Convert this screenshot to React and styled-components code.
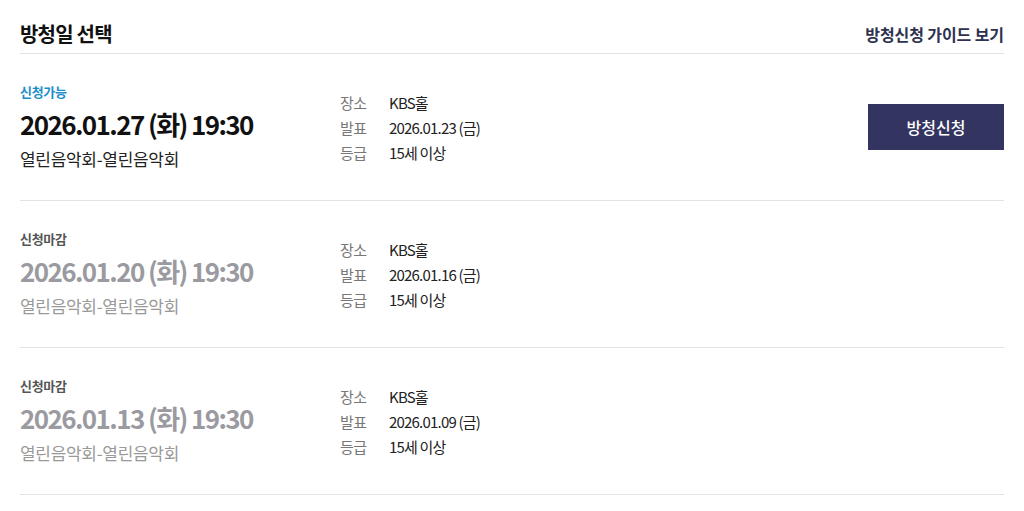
import React from "react";
import styled, { createGlobalStyle } from "styled-components";

const GlobalStyle = createGlobalStyle`
  body {
    margin: 0;
    background: #fff;
    font-family: "Noto Sans CJK KR", "Noto Sans", sans-serif;
  }
`

const Wrap = styled.div`
  padding: 0 20px;
`

const Header = styled.div`
  display: flex;
  justify-content: space-between;
  align-items: center;
  height: 54px;
  border-bottom: 1px solid #e3e3e3;
  box-sizing: border-box;
  padding-top: 14px;
`

const Title = styled.h2`
  margin: 0;
  font-size: 20px;
  font-weight: 700;
  color: #111;
  letter-spacing: -0.8px;
`

const GuideLink = styled.a`
  font-size: 16px;
  font-weight: 700;
  color: #2e3150;
  letter-spacing: -0.1px;
  text-decoration: none;
`

const Row = styled.div`
  display: flex;
  align-items: center;
  height: 147px;
  border-bottom: 1px solid #e3e3e3;
  box-sizing: border-box;
`

const Left = styled.div`
  width: 320px;
  display: flex;
  flex-direction: column;
`

const Status = styled.span`
  font-size: 13px;
  font-weight: 700;
  line-height: 20px;
  color: ${p => (p.open ? "#1b8ec9" : "#555")};
  letter-spacing: -0.3px;
`

const DateText = styled.div`
  font-size: 26px;
  font-weight: 700;
  line-height: 36px;
  margin-top: 4px;
  color: ${p => (p.open ? "#111" : "#9a9aa0")};
  letter-spacing: -1.6px;
`

const Program = styled.div`
  font-size: 17px;
  line-height: 26px;
  margin-top: 4px;
  color: ${p => (p.open ? "#222" : "#999")};
  letter-spacing: -0.3px;
`

const Info = styled.dl`
  flex: 1;
  margin: 0;
  display: grid;
  grid-template-columns: 50px 1fr;
  grid-auto-rows: 25px;
  align-items: center;
`

const Label = styled.dt`
  font-size: 15px;
  color: #777;
  letter-spacing: -0.5px;
`

const Value = styled.dd`
  margin: 0;
  margin-left: -1px;
  font-size: 15px;
  color: #222;
  letter-spacing: -0.8px;
`

const ApplyButton = styled.button`
  width: 136px;
  height: 46px;
  border: 0;
  background: #33345f;
  color: #fff;
  font-family: inherit;
  font-size: 16px;
  font-weight: 500;
  letter-spacing: 0;
  cursor: pointer;
`

const schedules = [
  { open: true, date: "2026.01.27 (화) 19:30", notice: "2026.01.23 (금)" },
  { open: false, date: "2026.01.20 (화) 19:30", notice: "2026.01.16 (금)" },
  { open: false, date: "2026.01.13 (화) 19:30", notice: "2026.01.09 (금)" },
]

export default function App() {
  return (
    <Wrap>
      <GlobalStyle />
      <Header>
        <Title>방청일 선택</Title>
        <GuideLink href="#">방청신청 가이드 보기</GuideLink>
      </Header>

      {schedules.map(item => (
        <Row key={item.date}>
          <Left>
            <Status open={item.open}>{item.open ? "신청가능" : "신청마감"}</Status>
            <DateText open={item.open}>{item.date}</DateText>
            <Program open={item.open}>열린음악회-열린음악회</Program>
          </Left>
          <Info>
            <Label>장소</Label>
            <Value>KBS홀</Value>
            <Label>발표</Label>
            <Value>{item.notice}</Value>
            <Label>등급</Label>
            <Value>15세 이상</Value>
          </Info>
          {item.open && <ApplyButton>방청신청</ApplyButton>}
        </Row>
      ))}
    </Wrap>
  )
}
